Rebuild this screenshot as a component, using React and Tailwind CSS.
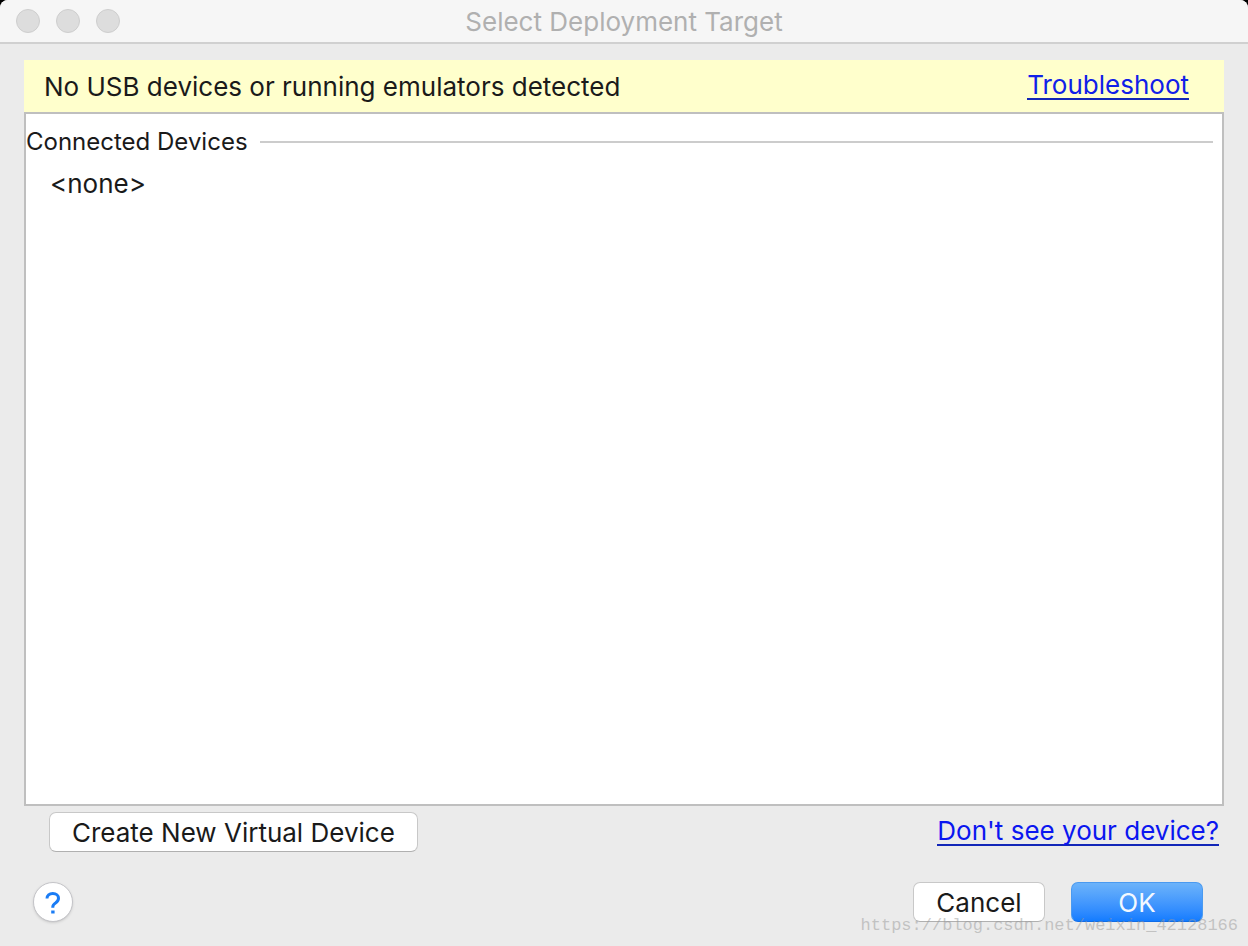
function TitleBar() {
  return (
    <header className="flex h-11 items-center border-b-2 border-[#d0d0d0] bg-[#f6f6f6] px-4">
      <div className="flex flex-1 gap-4">
        <button aria-label="Close" className="size-6 rounded-full border border-[#cecece] bg-[#dddddd]" />
        <button aria-label="Minimize" className="size-6 rounded-full border border-[#cecece] bg-[#dddddd]" />
        <button aria-label="Zoom" className="size-6 rounded-full border border-[#cecece] bg-[#dddddd]" />
      </div>
      <h1 className="pt-0.5 text-[#b0b0b0]">Select Deployment Target</h1>
      <div className="flex-1" />
    </header>
  );
}

export default function App() {
  return (
    <div className="min-h-screen bg-black font-['Inter',sans-serif] text-[26px] leading-8 text-[#1a1a1a]">
      <div className="relative flex min-h-screen flex-col overflow-hidden rounded-t-lg bg-[#ebebeb]">
        <TitleBar />

        <main className="flex flex-1 flex-col px-6 pt-4">
          {/* Warning banner */}
          <div className="flex h-[52px] items-center justify-between bg-[#ffffcc] pr-[35px] pl-5">
            <p className="pt-0.5">No USB devices or running emulators detected</p>
            <a href="#troubleshoot" className="border-b-2 border-[#1226b8] leading-[26px] text-[#1020e8]">
              Troubleshoot
            </a>
          </div>

          {/* Device list */}
          <section className="flex-1 border-2 border-[#bfbfbf] bg-white pt-3">
            <div className="flex items-center gap-3 pr-[9px]">
              <h2 className="text-2xl leading-8">Connected Devices</h2>
              <div className="h-0.5 flex-1 bg-[#cccccc]" />
            </div>
            <ul className="pt-2.5 pl-6">
              <li>&lt;none&gt;</li>
            </ul>
          </section>

          <div className="flex items-start justify-between pt-1.5 pr-[5px] pl-[25px]">
            <button className="h-10 rounded-[7px] border border-[#c8c8c8] border-b-[#b0b0b0] bg-white px-[22px] pt-0.5">
              Create New Virtual Device
            </button>
            <a href="#help" className="mt-1.5 border-b-2 border-[#1226b8] leading-[26px] text-[#0a16f0]">
              Don't see your device?
            </a>
          </div>
        </main>

        {/* Dialog buttons */}
        <footer className="flex items-center justify-between pt-[30px] pr-[45px] pb-6 pl-[33px]">
          <button
            aria-label="Help"
            className="flex size-10 items-center justify-center rounded-full border border-[#c4c4c8] bg-white text-[#1a7cf5] shadow-sm"
          >
            <svg viewBox="0 0 16 24" className="h-6 w-4" fill="none" stroke="currentColor" strokeWidth="3">
              <path d="M2 8.6C2 5.4 4.3 3.5 7.8 3.5c3.4 0 5.7 1.9 5.7 4.8 0 2.3-1.2 3.5-3 4.7-1.9 1.2-2.7 2-2.7 4v.8" />
              <path d="M6.2 22h3.4" />
            </svg>
          </button>
          <div className="flex gap-[26px]">
            <button className="h-10 w-33 rounded-[7px] border border-[#c8c8c8] border-b-[#b0b0b0] bg-white pt-0.5">
              Cancel
            </button>
            <button className="h-10 w-33 rounded-[7px] border border-[#4a9af0] border-b-[#0f6ce8] bg-linear-to-b from-[#6cb3fa] to-[#127cff] pt-0.5 text-[#f2f8ff]">
              OK
            </button>
          </div>
        </footer>

        <p className="pointer-events-none absolute right-2.5 bottom-2 font-['Liberation_Mono',monospace] text-[17px] leading-6 text-[#999999]/50">
          https://blog.csdn.net/weixin_42128166
        </p>
      </div>
    </div>
  );
}
